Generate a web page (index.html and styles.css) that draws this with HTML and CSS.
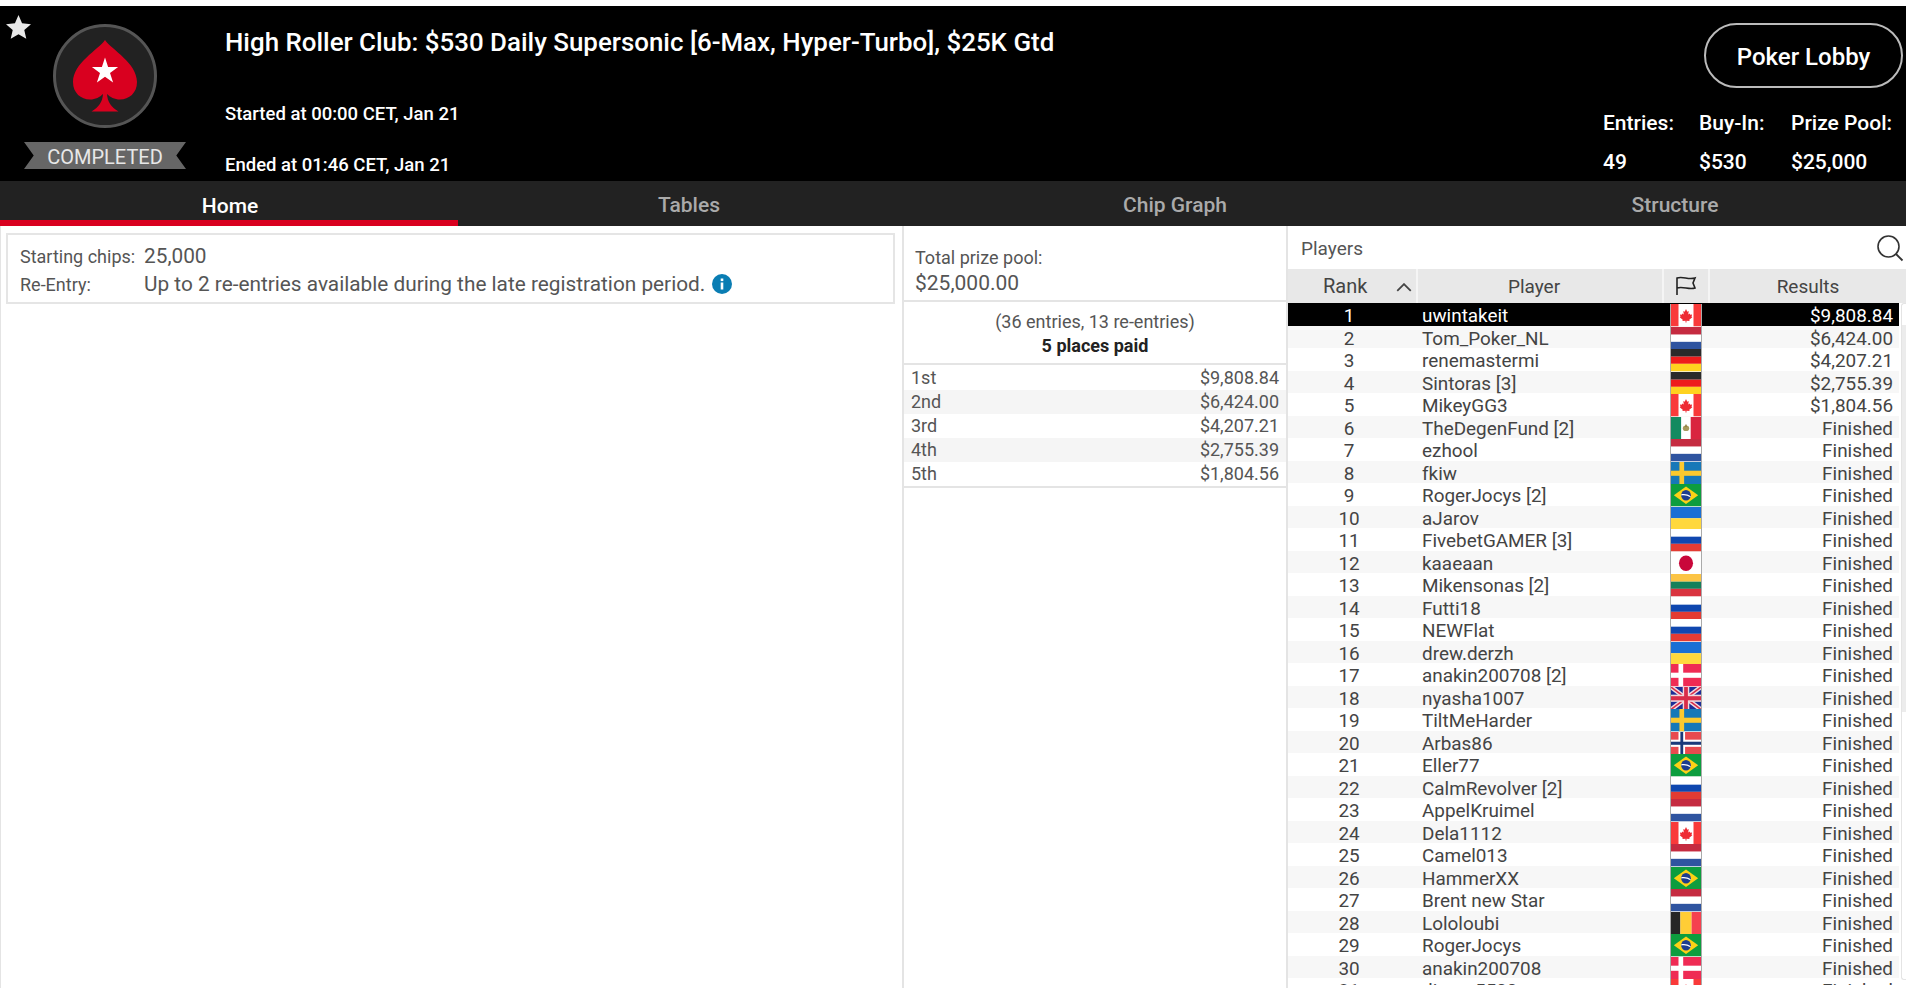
FILE: index.html
```html
<!DOCTYPE html>
<html lang="en">
<head>
<meta charset="utf-8">
<title>Tournament Lobby</title>
<link rel="stylesheet" href="styles.css">
</head>
<body>
<svg class="defs" width="0" height="0">
  <defs>
    <symbol id="ca" viewBox="0 0 32 22" preserveAspectRatio="none"><rect width="32" height="22" fill="#fff"/><rect width="8" height="22" fill="#f93a3a"/><rect x="24" width="8" height="22" fill="#f93a3a"/><path d="M16 5l1.4 2.6 1.5-.7-.5 3.4 1.6-1 .5 1.2 2-.2-.6 2.2.8.5-3.2 2.5.3 1.2-3.3-.4V18h-1v-1.7l-3.3.4.3-1.2-3.2-2.5.8-.5-.6-2.2 2 .2.5-1.2 1.6 1-.5-3.4 1.5.7z" fill="#ee2a33"/></symbol>
    <symbol id="nl" viewBox="0 0 32 22" preserveAspectRatio="none"><rect width="32" height="7.5" fill="#c52b40"/><rect y="7.5" width="32" height="7" fill="#fff"/><rect y="14.5" width="32" height="7.5" fill="#2f54a0"/></symbol>
    <symbol id="de" viewBox="0 0 32 22" preserveAspectRatio="none"><rect width="32" height="7.5" fill="#2a2a2a"/><rect y="7.5" width="32" height="7" fill="#ee1c1c"/><rect y="14.5" width="32" height="7.5" fill="#ffd21f"/></symbol>
    <symbol id="mx" viewBox="0 0 32 22" preserveAspectRatio="none"><rect width="11" height="22" fill="#138a60"/><rect x="11" width="11" height="22" fill="#fff"/><rect x="21" width="11" height="22" fill="#d9243f"/><ellipse cx="16" cy="11" rx="3.4" ry="2.8" fill="#a89a5c"/><path d="M16 6.500l1.300 3h-2.600z" fill="#8c7a3e"/></symbol>
    <symbol id="se" viewBox="0 0 32 22" preserveAspectRatio="none"><rect width="32" height="22" fill="#1778b8"/><rect x="9" width="5" height="22" fill="#fcc92e"/><rect y="8.500" width="32" height="5" fill="#fcc92e"/></symbol>
    <symbol id="br" viewBox="0 0 32 22" preserveAspectRatio="none"><rect width="32" height="22" fill="#0d9d3e"/><path d="M16 2.500L29 11 16 19.500 3 11z" fill="#fcd116"/><circle cx="16" cy="11" r="5.200" fill="#1d3d8f"/><path d="M11 10c3-.8 7-.2 10 2l-.4 1c-3-2-6.500-2.500-9.700-1.800z" fill="#fff"/></symbol>
    <symbol id="ua" viewBox="0 0 32 22" preserveAspectRatio="none"><rect width="32" height="11" fill="#1a6fd4"/><rect y="11" width="32" height="11" fill="#ffd83d"/></symbol>
    <symbol id="ru" viewBox="0 0 32 22" preserveAspectRatio="none"><rect width="32" height="7.500" fill="#fff"/><rect y="7.500" width="32" height="7" fill="#0f47af"/><rect y="14.500" width="32" height="7.500" fill="#e33b33"/></symbol>
    <symbol id="jp" viewBox="0 0 32 22" preserveAspectRatio="none"><rect width="32" height="22" fill="#fff"/><circle cx="16" cy="11" r="7.500" fill="#c9073a"/></symbol>
    <symbol id="lt" viewBox="0 0 32 22" preserveAspectRatio="none"><rect width="32" height="7.500" fill="#fcc445"/><rect y="7.500" width="32" height="7" fill="#14805a"/><rect y="14.500" width="32" height="7.500" fill="#d9333f"/></symbol>
    <symbol id="dk" viewBox="0 0 32 22" preserveAspectRatio="none"><rect width="32" height="22" fill="#ef2b54"/><rect x="8" width="5" height="22" fill="#fff"/><rect y="8.500" width="32" height="5" fill="#fff"/></symbol>
    <symbol id="gb" viewBox="0 0 32 22" preserveAspectRatio="none"><rect width="32" height="22" fill="#1c2e96"/><path d="M0 0l32 22M32 0L0 22" stroke="#f2d9dd" stroke-width="4.500"/><path d="M0 0l32 22M32 0L0 22" stroke="#d92c49" stroke-width="1.500"/><rect x="12.500" width="7" height="22" fill="#f2d9dd"/><rect y="7.500" width="32" height="7" fill="#f2d9dd"/><rect x="14" width="4" height="22" fill="#d92c49"/><rect y="9" width="32" height="4" fill="#d92c49"/></symbol>
    <symbol id="no" viewBox="0 0 32 22" preserveAspectRatio="none"><rect width="32" height="22" fill="#e84a4e"/><rect x="8" width="7" height="22" fill="#fff"/><rect y="7.500" width="32" height="7" fill="#fff"/><rect x="10" width="3" height="22" fill="#1a3a7a"/><rect y="9.500" width="32" height="3" fill="#1a3a7a"/></symbol>
    <symbol id="be" viewBox="0 0 32 22" preserveAspectRatio="none"><rect width="10" height="22" fill="#262626"/><rect x="10" width="12" height="22" fill="#ffcd36"/><rect x="22" width="10" height="22" fill="#f5414f"/></symbol>
  </defs>
</svg>
<div class="page">
  <header class="top">
    <div class="brand">
      <svg class="fav" viewBox="0 0 26 26"><path d="M13 0l3.700 8.700 9.300.8-7 6.100 2.100 9.100L13 20l-8.100 4.700L7 15.600 0 9.500l9.300-.8z" fill="#e8e8e8"/></svg>
      <div class="badge">
        <svg class="logo" viewBox="0 0 106 106">
          <circle cx="53" cy="53" r="50.500" fill="#222" stroke="#555" stroke-width="3"/>
          <path d="M53 17C46 27 21 40 21 59c0 11 8 17.500 17 17.500 5.500 0 10-2.500 13-5.500-.5 8-4 13-11.500 17.500h27C59 84 55.500 79 55 71c3 3 7.500 5.500 13 5.500 9 0 17-6.500 17-17.500 0-19-25-32-32-42z" fill="#d9001f"/>
          <path d="M53 34.500l3.100 9.600h10l-8.100 5.900 3.100 9.600-8.100-5.900-8.100 5.900 3.100-9.600-8.100-5.900h10z" fill="#fff"/>
        </svg>
        <div class="ribbon">COMPLETED</div>
      </div>
    </div>
    <div class="info">
      <h1 class="title">High Roller Club: $530 Daily Supersonic [6-Max, Hyper-Turbo], $25K Gtd</h1>
      <p class="time">Started at 00:00 CET, Jan 21</p>
      <p class="time">Ended at 01:46 CET, Jan 21</p>
    </div>
    <div class="side">
      <a class="lobby">Poker Lobby</a>
      <div class="stats">
        <div class="stat stat-entries"><span>Entries:</span><span>49</span></div>
        <div class="stat stat-buyin"><span>Buy-In:</span><span>$530</span></div>
        <div class="stat"><span>Prize Pool:</span><span>$25,000</span></div>
      </div>
    </div>
  </header>
  <nav class="tabs">
    <div class="tab active">Home</div>
    <div class="tab">Tables</div>
    <div class="tab">Chip Graph</div>
    <div class="tab tab-last">Structure</div>
  </nav>
  <main class="content">
    <section class="left">
      <div class="details">
        <div class="detail"><span class="dt">Starting chips:</span><span class="dd">25,000</span></div>
        <div class="detail"><span class="dt">Re-Entry:</span><span class="dd">Up to 2 re-entries available during the late registration period.</span><svg class="info-i" viewBox="0 0 20 20"><circle cx="10" cy="10" r="10" fill="#0a7db3"/><rect x="8.700" y="8.500" width="2.600" height="7" fill="#fff"/><rect x="8.700" y="4.500" width="2.600" height="2.600" fill="#fff"/></svg></div>
      </div>
    </section>
    <section class="prizes">
      <div class="pool"><div class="pool-l">Total prize pool:</div><div class="pool-v">$25,000.00</div></div>
      <div class="paid"><div>(36 entries, 13 re-entries)</div><div class="paid-b">5 places paid</div></div>
      <div class="places">
        <div class="place"><span>1st</span><span>$9,808.84</span></div>
        <div class="place"><span>2nd</span><span>$6,424.00</span></div>
        <div class="place"><span>3rd</span><span>$4,207.21</span></div>
        <div class="place"><span>4th</span><span>$2,755.39</span></div>
        <div class="place"><span>5th</span><span>$1,804.56</span></div>
      </div>
    </section>
    <section class="players">
      <div class="ptitle"><span>Players</span>
        <svg class="search" viewBox="0 0 28 28"><circle cx="12.500" cy="12.500" r="10.500" fill="none" stroke="#333" stroke-width="1.600"/><path d="M20 20l6.500 6.500" stroke="#333" stroke-width="1.800" fill="none"/></svg>
      </div>
      <div class="thead">
        <div class="th th-rank"><span>Rank</span><svg class="chev" viewBox="0 0 14 8"><path d="M1 7l6-6 6 6" fill="none" stroke="#444" stroke-width="1.600"/></svg></div>
        <div class="th th-player">Player</div>
        <div class="th"><svg class="flagicon" viewBox="0 0 22 20"><path d="M2 19V2c6-2 11 2 18 0l-2 5 2 5c-6 2-12-2-18 0" fill="none" stroke="#222" stroke-width="1.600"/></svg></div>
        <div class="th">Results</div>
      </div>
      <div class="tbody">
        <div class="scrollarea">
          <div class="row selected"><span class="r">1</span><span class="p">uwintakeit</span><svg class="f"><use href="#ca"/></svg><span class="s">$9,808.84</span></div>
          <div class="row"><span class="r">2</span><span class="p">Tom_Poker_NL</span><svg class="f"><use href="#nl"/></svg><span class="s">$6,424.00</span></div>
          <div class="row"><span class="r">3</span><span class="p">renemastermi</span><svg class="f"><use href="#de"/></svg><span class="s">$4,207.21</span></div>
          <div class="row"><span class="r">4</span><span class="p">Sintoras [3]</span><svg class="f"><use href="#de"/></svg><span class="s">$2,755.39</span></div>
          <div class="row"><span class="r">5</span><span class="p">MikeyGG3</span><svg class="f"><use href="#ca"/></svg><span class="s">$1,804.56</span></div>
          <div class="row"><span class="r">6</span><span class="p">TheDegenFund [2]</span><svg class="f"><use href="#mx"/></svg><span class="s">Finished</span></div>
          <div class="row"><span class="r">7</span><span class="p">ezhool</span><svg class="f"><use href="#nl"/></svg><span class="s">Finished</span></div>
          <div class="row"><span class="r">8</span><span class="p">fkiw</span><svg class="f"><use href="#se"/></svg><span class="s">Finished</span></div>
          <div class="row"><span class="r">9</span><span class="p">RogerJocys [2]</span><svg class="f"><use href="#br"/></svg><span class="s">Finished</span></div>
          <div class="row"><span class="r">10</span><span class="p">aJarov</span><svg class="f"><use href="#ua"/></svg><span class="s">Finished</span></div>
          <div class="row"><span class="r">11</span><span class="p">FivebetGAMER [3]</span><svg class="f"><use href="#ru"/></svg><span class="s">Finished</span></div>
          <div class="row"><span class="r">12</span><span class="p">kaaeaan</span><svg class="f"><use href="#jp"/></svg><span class="s">Finished</span></div>
          <div class="row"><span class="r">13</span><span class="p">Mikensonas [2]</span><svg class="f"><use href="#lt"/></svg><span class="s">Finished</span></div>
          <div class="row"><span class="r">14</span><span class="p">Futti18</span><svg class="f"><use href="#ru"/></svg><span class="s">Finished</span></div>
          <div class="row"><span class="r">15</span><span class="p">NEWFlat</span><svg class="f"><use href="#ru"/></svg><span class="s">Finished</span></div>
          <div class="row"><span class="r">16</span><span class="p">drew.derzh</span><svg class="f"><use href="#ua"/></svg><span class="s">Finished</span></div>
          <div class="row"><span class="r">17</span><span class="p">anakin200708 [2]</span><svg class="f"><use href="#dk"/></svg><span class="s">Finished</span></div>
          <div class="row"><span class="r">18</span><span class="p">nyasha1007</span><svg class="f"><use href="#gb"/></svg><span class="s">Finished</span></div>
          <div class="row"><span class="r">19</span><span class="p">TiltMeHarder</span><svg class="f"><use href="#se"/></svg><span class="s">Finished</span></div>
          <div class="row"><span class="r">20</span><span class="p">Arbas86</span><svg class="f"><use href="#no"/></svg><span class="s">Finished</span></div>
          <div class="row"><span class="r">21</span><span class="p">Eller77</span><svg class="f"><use href="#br"/></svg><span class="s">Finished</span></div>
          <div class="row"><span class="r">22</span><span class="p">CalmRevolver [2]</span><svg class="f"><use href="#ru"/></svg><span class="s">Finished</span></div>
          <div class="row"><span class="r">23</span><span class="p">AppelKruimel</span><svg class="f"><use href="#nl"/></svg><span class="s">Finished</span></div>
          <div class="row"><span class="r">24</span><span class="p">Dela1112</span><svg class="f"><use href="#ca"/></svg><span class="s">Finished</span></div>
          <div class="row"><span class="r">25</span><span class="p">Camel013</span><svg class="f"><use href="#nl"/></svg><span class="s">Finished</span></div>
          <div class="row"><span class="r">26</span><span class="p">HammerXX</span><svg class="f"><use href="#br"/></svg><span class="s">Finished</span></div>
          <div class="row"><span class="r">27</span><span class="p">Brent new Star</span><svg class="f"><use href="#nl"/></svg><span class="s">Finished</span></div>
          <div class="row"><span class="r">28</span><span class="p">Lololoubi</span><svg class="f"><use href="#be"/></svg><span class="s">Finished</span></div>
          <div class="row"><span class="r">29</span><span class="p">RogerJocys</span><svg class="f"><use href="#br"/></svg><span class="s">Finished</span></div>
          <div class="row"><span class="r">30</span><span class="p">anakin200708</span><svg class="f"><use href="#dk"/></svg><span class="s">Finished</span></div>
          <div class="row"><span class="r">31</span><span class="p">dimon5500</span><svg class="f"><use href="#ca"/></svg><span class="s">Finished</span></div>
        </div>
        <div class="scrollbar"><div class="thumb"></div></div>
      </div>
    </section>
  </main>
</div>
</body>
</html>
```
FILE: styles.css
```css
* { box-sizing: border-box; }
html, body { margin: 0; height: 100%; overflow: hidden; background: #fff; }
body { font-family: Roboto, "Liberation Sans", sans-serif; color: #444; }
.defs { position: absolute; }
.page { height: 988px; padding-top: 6px; display: flex; flex-direction: column; }

.top { height: 175px; background: #000; color: #fff; display: flex; flex: none; }
.brand { width: 225px; flex: none; padding: 9px 0 0 6px; display: flex; align-items: flex-start; }
.fav { width: 25px; height: 25px; flex: none; }
.badge { margin-left: -7px; width: 162px; display: flex; flex-direction: column; align-items: center; padding-top: 8px; }
.logo { width: 106px; height: 106px; display: block; }
.ribbon { margin-top: 13px; width: 162px; height: 27px; background: #666; color: #e8e8e8; font-size: 20px; line-height: 31px; text-align: center; clip-path: polygon(0 0, 100% 0, 94% 50%, 100% 100%, 0 100%, 6% 50%); }
.info { flex: 1; min-width: 0; padding-top: 21px; }
.title { margin: 0 0 46px; font-size: 25.9px; font-weight: 500; line-height: 30px; }
.time { margin: 0 0 29px; font-size: 18.5px; font-weight: 500; line-height: 22px; }
.side { width: 303px; flex: none; display: flex; flex-direction: column; align-items: flex-end; padding: 17px 3px 0 0; }
.lobby { width: 199px; height: 65px; padding-top: 2px; border: 2px solid #bbb; border-radius: 33px; display: flex; align-items: center; justify-content: center; font-size: 24px; font-weight: 500; }
.stats { display: flex; align-self: flex-start; margin-top: 24px; font-size: 21px; font-weight: 500; }
.stat { display: flex; flex-direction: column; gap: 16px; line-height: 23px; }
.stat-entries { width: 96px; }
.stat-buyin { width: 92px; }

.tabs { height: 45px; flex: none; background: #222; display: grid; grid-template-columns: 458px 462px 510px 476px; grid-template-rows: 45px; }
.tab { color: #aaa; font-size: 21px; font-weight: 500; text-align: center; line-height: 45px; padding-top: 2px; }
.tab.active { color: #fff; border-bottom: 6px solid #d9001f; padding: 3px 0 0 2px; }
.tab-last { padding-left: 14px; }

.content { flex: 1; min-height: 0; display: grid; grid-template-columns: 902px 386px 618px; height: 757px; }
.left { border-left: 1px solid #e4e4e4; padding: 7px 5px 0 5px; }
.details { height: 71px; border: 2px solid #e5e5e5; padding: 7px 0 0 12px; width: 889px; }
.detail { display: flex; align-items: center; height: 28px; }
.dt { width: 124px; font-size: 18px; color: #555; }
.dd { font-size: 20.800px; color: #555; }
.info-i { width: 20px; height: 20px; margin-left: 7px; }

.prizes { border-left: 2px solid #e4e4e4; border-right: 2px solid #e4e4e4; font-size: 18px; color: #555; }
.pool { height: 76px; padding: 19px 0 0 11px; border-bottom: 2px solid #e4e4e4; }
.pool-l { line-height: 25px; }
.pool-v { font-size: 21px; line-height: 26px; }
.paid { height: 63px; padding-top: 8px; text-align: center; line-height: 24px; border-bottom: 2px solid #e4e4e4; }
.paid-b { font-weight: 700; color: #222; }
.places { border-bottom: 2px solid #e4e4e4; padding-top: 1px; }
.place { height: 24px; line-height: 24px; padding: 0 7px; display: flex; justify-content: space-between; }
.place:nth-child(even) { background: #f5f5f5; }

.players { display: flex; flex-direction: column; min-height: 0; overflow: hidden; padding-bottom: 3px; }
.ptitle { height: 43px; flex: none; display: flex; align-items: center; justify-content: space-between; padding: 1px 0 0 13px; font-size: 19px; color: #555; }
.search { width: 28px; height: 28px; margin-right: 2px; }
.thead { height: 34px; flex: none; background: #e8e8e8; display: grid; grid-template-columns: 128px 246px 46px 198px; font-size: 19px; color: #444; }
.th { display: flex; align-items: center; justify-content: center; border-left: 2px solid #f5f5f5; }
.th:first-child { border-left: 0; }
.th-rank { justify-content: flex-start; }
.th-rank span { margin-left: 35px; font-size: 20px; }
.th-player { padding-right: 12px; }
.chev { width: 16px; height: 9px; margin-left: 29px; margin-top: 3px; }
.flagicon { width: 22px; height: 20px; }
.tbody { flex: 1; min-height: 0; display: flex; overflow: hidden; }
.scrollarea { width: 611px; flex: none; }
.row { height: 22.5px; display: grid; grid-template-columns: 122px 260px 32px 191px; align-items: center; font-size: 18.900px; line-height: 22.5px; color: #444; }
.row span { padding-top: 2px; }
.row:nth-child(even) { background: #f7f7f7; }
.row.selected { background: #000; color: #fff; }
.r { text-align: center; }
.p { padding-left: 12px; }
.f { width: 32px; height: 22.5px; display: block; border-left: 1px solid #aaa; border-right: 1px solid #aaa; }
.s { text-align: right; }
.scrollbar { width: 5px; height: 677px; margin-left: 2px; flex: none; border: 1px solid #e4e4e4; border-right: 0; border-radius: 3px 0 0 3px; padding-top: 21px; }
.thumb { height: 387px; background: #ececec; }
```
